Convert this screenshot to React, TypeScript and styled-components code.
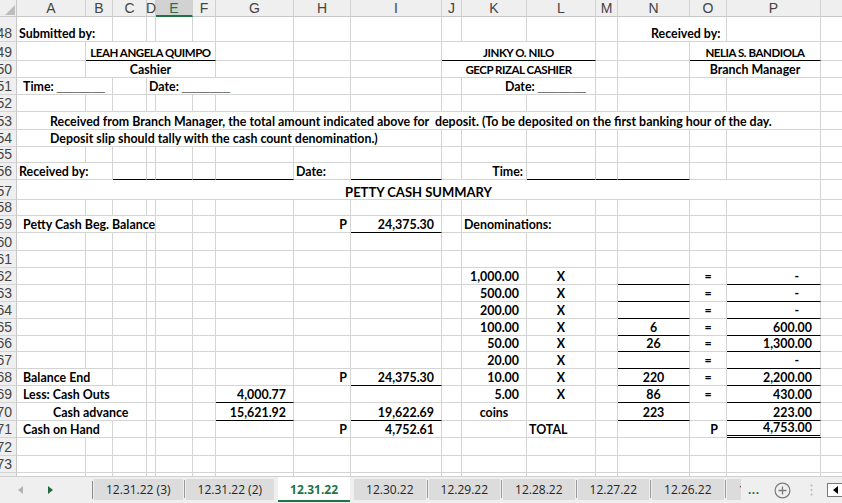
import React from 'react';
import styled, { createGlobalStyle } from 'styled-components';

const GlobalStyle = createGlobalStyle`
  html, body {
    margin: 0;
    padding: 0;
    background: #ffffff;
  }
  body {
    font-family: Lato, "Liberation Sans", sans-serif;
  }
`;

type Align = 'left' | 'right' | 'center';
type Border = 'single' | 'double';

interface Seg {
  from: string;
  to?: string;
  text?: string;
  blank?: number; // trailing "fill in" underscores
  align?: Align;
  pl?: number;
  pr?: number;
  caps?: boolean;
  title?: boolean;
}

const COLS: [string, number][] = [
  ['A', 69], ['B', 27], ['C', 34], ['D', 9], ['E', 37], ['F', 23], ['G', 78],
  ['H', 57], ['I', 91], ['J', 20], ['K', 65], ['L', 69], ['M', 22], ['N', 72],
  ['O', 37], ['P', 94], ['Q', 64],
];
const SELECTED_COL = 'E';

// row number -> height in px
const ROW_HEIGHTS: [number, number][] = [
  [48, 25], [49, 19], [50, 17], [51, 17], [52, 17], [53, 18], [54, 17], [55, 16],
  [56, 17], [57, 20], [58, 16], [59, 17], [60, 18], [61, 17], [62, 17], [63, 17],
  [64, 17], [65, 17], [66, 16], [67, 17], [68, 17], [69, 17], [70, 18], [71, 17],
  [72, 18], [73, 17], [74, 17],
];

const DENOMS: [string, string, string][] = [
  ['1,000.00', '', '-'],
  ['500.00', '', '-'],
  ['200.00', '', '-'],
  ['100.00', '6', '600.00'],
  ['50.00', '26', '1,300.00'],
  ['20.00', '', '-'],
  ['10.00', '220', '2,200.00'],
  ['5.00', '86', '430.00'],
];

const denomRow = (i: number): Seg[] => {
  const [value, count, amount] = DENOMS[i];
  return [
    { from: 'K', text: value, align: 'right', pr: 7 },
    { from: 'L', text: 'X', align: 'center' },
    { from: 'N', text: count, align: 'center' },
    { from: 'O', text: '=', align: 'center' },
    { from: 'P', text: amount, align: 'right', pr: amount === '-' ? 21 : 8 },
  ];
};

const SHEET: Record<number, Seg[]> = {
  48: [
    { from: 'A', to: 'B', text: 'Submitted by:', pl: 2 },
    { from: 'N', to: 'O', text: 'Received by:', pl: 33 },
  ],
  49: [
    { from: 'B', to: 'F', text: 'LEAH ANGELA QUIMPO', align: 'center', caps: true },
    { from: 'J', to: 'L', text: 'JINKY O. NILO', align: 'center', caps: true },
    { from: 'O', to: 'P', text: 'NELIA S. BANDIOLA', align: 'center', caps: true },
  ],
  50: [
    { from: 'B', to: 'F', text: 'Cashier', align: 'center' },
    { from: 'J', to: 'L', text: 'GECP RIZAL CASHIER', align: 'center', caps: true },
    { from: 'O', to: 'P', text: 'Branch Manager', align: 'center' },
  ],
  51: [
    { from: 'A', to: 'B', text: 'Time: ', blank: 7, pl: 6 },
    { from: 'D', to: 'G', text: 'Date: ', blank: 7, pl: 2 },
    { from: 'K', to: 'L', text: 'Date: ', blank: 7, align: 'right', pr: 9 },
  ],
  53: [
    {
      from: 'A', to: 'P', pl: 33,
      text: 'Received from Branch Manager, the total amount indicated above for  deposit. (To be deposited on the first banking hour of the day.',
    },
  ],
  54: [
    { from: 'A', to: 'I', pl: 33, text: 'Deposit slip should tally with the cash count denomination.)' },
  ],
  56: [
    { from: 'A', to: 'B', text: 'Received by:', pl: 2 },
    { from: 'H', text: 'Date:', pl: 2 },
    { from: 'K', text: 'Time:', align: 'right', pr: 3 },
  ],
  57: [{ from: 'A', to: 'P', text: 'PETTY CASH SUMMARY', align: 'center', title: true }],
  59: [
    { from: 'A', to: 'D', text: 'Petty Cash Beg. Balance', pl: 6 },
    { from: 'H', text: 'P', align: 'right', pr: 3 },
    { from: 'I', text: '24,375.30', align: 'right', pr: 7 },
    { from: 'K', to: 'L', text: 'Denominations:', pl: 2 },
  ],
  62: denomRow(0),
  63: denomRow(1),
  64: denomRow(2),
  65: denomRow(3),
  66: denomRow(4),
  67: denomRow(5),
  68: [
    { from: 'A', to: 'B', text: 'Balance End', pl: 6 },
    { from: 'H', text: 'P', align: 'right', pr: 3 },
    { from: 'I', text: '24,375.30', align: 'right', pr: 7 },
    ...denomRow(6),
  ],
  69: [
    { from: 'A', to: 'C', text: 'Less: Cash Outs', pl: 6 },
    { from: 'G', text: '4,000.77', align: 'right', pr: 7 },
    ...denomRow(7),
  ],
  70: [
    { from: 'A', to: 'C', text: 'Cash advance', pl: 36 },
    { from: 'G', text: '15,621.92', align: 'right', pr: 7 },
    { from: 'I', text: '19,622.69', align: 'right', pr: 7 },
    { from: 'K', text: 'coins', align: 'center' },
    { from: 'N', text: '223', align: 'center' },
    { from: 'P', text: '223.00', align: 'right', pr: 8 },
  ],
  71: [
    { from: 'A', to: 'B', text: 'Cash on Hand', pl: 6 },
    { from: 'H', text: 'P', align: 'right', pr: 3 },
    { from: 'I', text: '4,752.61', align: 'right', pr: 7 },
    { from: 'L', text: 'TOTAL', pl: 2 },
    { from: 'O', text: 'P', align: 'right', pr: 8 },
    { from: 'P', text: '4,753.00', align: 'right', pr: 8 },
  ],
};

// black bottom borders, keyed by row + column letter
const BORDERS: Record<string, Border> = {};
const setBorder = (row: number, cols: string, kind: Border = 'single') => {
  cols.split('').forEach(c => { BORDERS[`${row}${c}`] = kind; });
};
setBorder(49, 'BCDEF');
setBorder(49, 'JKL');
setBorder(49, 'OP');
setBorder(56, 'CDEFG');
setBorder(56, 'I');
setBorder(56, 'LMN');
setBorder(59, 'I');
for (let r = 62; r <= 70; r++) setBorder(r, 'NP');
setBorder(68, 'I');
setBorder(69, 'G');
setBorder(70, 'GI');
setBorder(71, 'P', 'double');

const TABS = ['12.31.22 (3)', '12.31.22 (2)', '12.31.22', '12.30.22', '12.29.22', '12.28.22', '12.27.22', '12.26.22', '12.25.22'];
const ACTIVE_TAB = 2;

const GRID = '#d4d4d4';
const HEADER_BG = '#efefef';
const EXCEL_GREEN = '#217346';

const Window = styled.div`
  width: 842px;
  height: 503px;
  display: flex;
  flex-direction: column;
  overflow: hidden;
  background: #fff;
`;

const Sheet = styled.div`
  flex: none;
  height: 476px;
  overflow: hidden;
`;

const Row = styled.div<{ $h: number }>`
  display: flex;
  height: ${p => p.$h}px;
`;

const Corner = styled.div`
  flex: none;
  width: 17px;
  box-sizing: border-box;
  background: ${HEADER_BG};
  border-right: 1px solid #c8c8c8;
  border-bottom: 1px solid #c8c8c8;
  display: flex;
  align-items: flex-end;
  justify-content: flex-end;
  padding: 0 1px 1px 0;
`;

const ColHeader = styled.div<{ $w: number; $selected?: boolean }>`
  flex: none;
  width: ${p => p.$w}px;
  box-sizing: border-box;
  background: ${p => (p.$selected ? '#d2d2d2' : HEADER_BG)};
  color: ${p => (p.$selected ? EXCEL_GREEN : '#444')};
  border-right: 1px solid #d0d0d0;
  border-bottom: ${p => (p.$selected ? `2px solid ${EXCEL_GREEN}` : '1px solid #c8c8c8')};
  font-family: "Liberation Sans", Arial, sans-serif;
  font-size: 14px;
  line-height: 16px;
  display: flex;
  align-items: center;
  justify-content: center;
`;

const RowHeader = styled.div`
  flex: none;
  width: 17px;
  box-sizing: border-box;
  overflow: hidden;
  background: ${HEADER_BG};
  color: #444;
  border-right: 1px solid #c8c8c8;
  border-bottom: 1px solid ${GRID};
  font-family: "Liberation Sans", Arial, sans-serif;
  font-size: 14px;
  line-height: 16px;
  display: flex;
  align-items: flex-end;
  justify-content: flex-end;
  padding-right: 4px;
  white-space: nowrap;
`;

const Cell = styled.div<{
  $w: number;
  $border?: Border;
  $align?: Align;
  $pl?: number;
  $pr?: number;
  $caps?: boolean;
  $title?: boolean;
}>`
  flex: none;
  width: ${p => p.$w}px;
  box-sizing: border-box;
  border-right: 1px solid ${GRID};
  border-bottom: ${p =>
    p.$border === 'double' ? '3px double #000' : p.$border === 'single' ? '1px solid #000' : `1px solid ${GRID}`};
  display: flex;
  align-items: flex-end;
  justify-content: ${p => (p.$align === 'right' ? 'flex-end' : p.$align === 'center' ? 'center' : 'flex-start')};
  padding-left: ${p => p.$pl ?? 0}px;
  padding-right: ${p => p.$pr ?? 0}px;
  font-weight: 700;
  font-size: ${p => (p.$title ? 13 : p.$caps ? 11.5 : 12.4)}px;
  letter-spacing: ${p => (p.$caps ? -0.45 : 0)}px;
  line-height: 14px;
  color: #000;
  white-space: pre;
`;

// the "________" fill-in lines; Calibri's underscores join up, Lato's don't
const Blank = styled.span`
  font-family: "Liberation Sans", Arial, sans-serif;
  font-weight: 700;
`;

const TabBar = styled.div`
  flex: none;
  height: 27px;
  box-sizing: border-box;
  background: #efefef;
  border-top: 1px solid #d0d0d0;
  display: flex;
  font-family: "Open Sans", "Noto Sans", sans-serif;
`;

const NavArea = styled.div`
  flex: none;
  width: 92px;
  display: flex;
  align-items: center;
  gap: 25px;
  padding-left: 18px;
  box-sizing: border-box;
`;

const Divider = styled.div`
  flex: none;
  width: 1px;
  height: 18px;
  align-self: center;
  background: #8c8c8c;
`;

const Tabs = styled.div`
  flex: 1 1 auto;
  min-width: 0;
  overflow: hidden;
  display: flex;
  align-items: flex-start;
  padding-left: 1px;
`;

const Tab = styled.div<{ $active?: boolean }>`
  flex: none;
  height: ${p => (p.$active ? 26 : 21)}px;
  margin-top: ${p => (p.$active ? -1 : 2)}px;
  padding: ${p => (p.$active ? '3px 12px 0' : '0 12px')};
  box-sizing: border-box;
  background: ${p => (p.$active ? '#fff' : '#dcdcdc')};
  color: ${p => (p.$active ? EXCEL_GREEN : '#262626')};
  font-weight: ${p => (p.$active ? 700 : 400)};
  font-size: 12px;
  line-height: 21px;
  border-bottom: ${p => (p.$active ? `2px solid ${EXCEL_GREEN}` : 'none')};
  white-space: nowrap;
`;

const TabGap = styled.div<{ $line?: boolean }>`
  flex: none;
  width: ${p => (p.$line ? 1 : 2)}px;
  margin: ${p => (p.$line ? '3px 1px 0' : '0 1px')};
  height: 18px;
  background: ${p => (p.$line ? '#9a9a9a' : 'transparent')};
`;

const Controls = styled.div`
  flex: none;
  width: 101px;
  display: flex;
  align-items: center;
`;

const More = styled.span`
  margin-left: 7px;
  width: 17px;
  color: ${EXCEL_GREEN};
  font-family: "Liberation Sans", sans-serif;
  font-weight: 700;
  font-size: 12px;
  letter-spacing: 0.5px;
  line-height: 12px;
`;

const ScrollButton = styled.div`
  margin-left: auto;
  width: 15px;
  height: 14px;
  box-sizing: border-box;
  background: #fff;
  border: 1px solid #7a7a7a;
  border-right: none;
  display: flex;
  align-items: center;
  justify-content: center;
`;

const Triangle = ({ dir, color }: { dir: 'left' | 'right'; color: string }) => (
  <svg width="5" height="8" viewBox="0 0 5 8">
    <path d={dir === 'right' ? 'M0 0 L5 4 L0 8 Z' : 'M5 0 L0 4 L5 8 Z'} fill={color} />
  </svg>
);

const PlusCircle = () => (
  <svg width="17" height="17" viewBox="0 0 17 17" style={{ marginLeft: 9 }}>
    <circle cx="8.5" cy="8.5" r="7.4" fill="none" stroke="#7b7b7b" strokeWidth="1.2" />
    <path d="M8.5 4.5 V12.5 M4.5 8.5 H12.5" stroke="#7b7b7b" strokeWidth="1.3" />
  </svg>
);

const VDots = () => (
  <svg width="3" height="12" viewBox="0 0 3 12" style={{ marginLeft: 19 }}>
    <circle cx="1.5" cy="1.5" r="1" fill="#b4b4b4" />
    <circle cx="1.5" cy="6" r="1" fill="#b4b4b4" />
    <circle cx="1.5" cy="10.5" r="1" fill="#b4b4b4" />
  </svg>
);

const colWidth = (from: string, to?: string) => {
  const a = COLS.findIndex(c => c[0] === from);
  const b = to ? COLS.findIndex(c => c[0] === to) : a;
  return COLS.slice(a, b + 1).reduce((s, c) => s + c[1], 0);
};

const SheetRow = ({ row, height }: { row: number; height: number }) => {
  const segs = SHEET[row] ?? [];
  const cells: React.ReactNode[] = [];
  let i = 0;
  while (i < COLS.length) {
    const letter = COLS[i][0];
    const seg = segs.find(s => s.from === letter);
    if (seg) {
      const end = seg.to ? COLS.findIndex(c => c[0] === seg.to) : i;
      cells.push(
        <Cell
          key={letter}
          $w={colWidth(seg.from, seg.to)}
          $border={BORDERS[`${row}${letter}`]}
          $align={seg.align}
          $pl={seg.pl}
          $pr={seg.pr}
          $caps={seg.caps}
          $title={seg.title}
        >
          <span>
            {seg.text}
            {seg.blank ? <Blank>{'_'.repeat(seg.blank)}</Blank> : null}
          </span>
        </Cell>
      );
      i = end + 1;
    } else {
      cells.push(<Cell key={letter} $w={COLS[i][1]} $border={BORDERS[`${row}${letter}`]} />);
      i += 1;
    }
  }
  return (
    <Row $h={height}>
      <RowHeader>{row}</RowHeader>
      {cells}
    </Row>
  );
};

const App: React.FC = () => {
  return (
    <>
      <GlobalStyle />
      <Window>
        <Sheet>
          <Row $h={17}>
            <Corner>
              <svg width="10" height="10" viewBox="0 0 10 10">
                <path d="M10 0 L10 10 L0 10 Z" fill="#bdbdbd" />
              </svg>
            </Corner>
            {COLS.map(([letter, w]) => (
              <ColHeader key={letter} $w={w} $selected={letter === SELECTED_COL}>
                {letter === 'Q' ? '' : letter}
              </ColHeader>
            ))}
          </Row>
          {ROW_HEIGHTS.map(([row, h]) => (
            <SheetRow key={row} row={row} height={h} />
          ))}
        </Sheet>
        <TabBar>
          <NavArea>
            <Triangle dir="left" color="#b3b3b3" />
            <Triangle dir="right" color="#1f6b3c" />
          </NavArea>
          <Divider />
          <Tabs>
            {TABS.map((name, i) => (
              <React.Fragment key={name}>
                {i > 0 && <TabGap $line={i !== ACTIVE_TAB && i !== ACTIVE_TAB + 1} />}
                <Tab $active={i === ACTIVE_TAB}>{name}</Tab>
              </React.Fragment>
            ))}
          </Tabs>
          <Controls>
            <More>...</More>
            <PlusCircle />
            <VDots />
            <ScrollButton>
              <Triangle dir="left" color="#000" />
            </ScrollButton>
          </Controls>
        </TabBar>
      </Window>
    </>
  );
};

export default App;
